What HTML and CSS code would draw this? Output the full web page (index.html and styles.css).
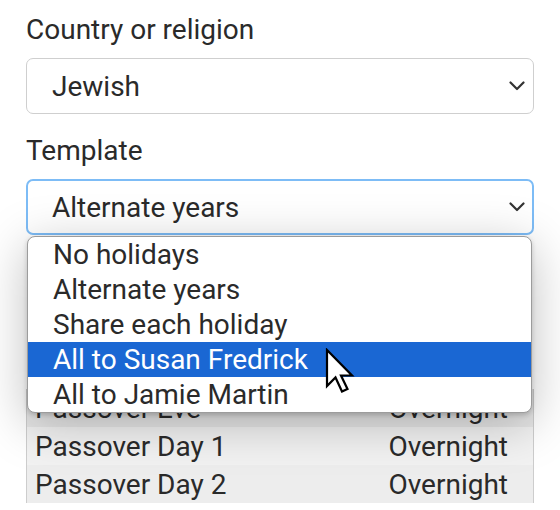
FILE: index.html
```html
<!DOCTYPE html>
<html>
<head>
<meta charset="utf-8">
<link rel="stylesheet" href="styles.css">
</head>
<body>
<div class="page">
  <label class="lbl">Country or religion</label>
  <div class="select s1">
    <span class="val">Jewish</span>
    <svg class="chev" width="16" height="10" viewBox="0 0 16 10"><path d="M1.5 1.5 L8 8 L14.5 1.5" fill="none" stroke="#333" stroke-width="2.2" stroke-linecap="round" stroke-linejoin="round"/></svg>
  </div>
  <label class="lbl lbl2">Template</label>
  <div class="wrap">
    <div class="select s2">
      <span class="val">Alternate years</span>
      <svg class="chev" width="16" height="10" viewBox="0 0 16 10"><path d="M1.5 1.5 L8 8 L14.5 1.5" fill="none" stroke="#333" stroke-width="2.2" stroke-linecap="round" stroke-linejoin="round"/></svg>
    </div>
    <ul class="dropdown">
      <li>No holidays</li>
      <li>Alternate years</li>
      <li>Share each holiday</li>
      <li class="sel">All to Susan Fredrick</li>
      <li>All to Jamie Martin</li>
    </ul>
  </div>
  <table class="tbl">
    <tr class="r-eve"><td>Passover Eve</td><td class="t">Overnight</td></tr>
    <tr class="r-d1"><td>Passover Day 1</td><td class="t">Overnight</td></tr>
    <tr class="r-d2"><td>Passover Day 2</td><td class="t">Overnight</td></tr>
  </table>
  <svg class="cursor" width="30" height="46" viewBox="0 0 30 46"><path d="M2 2 L2 38 L10.5 29.5 L17 43.5 L22.5 41 L16 27.5 L27 27.5 Z" fill="#fff" stroke="#000" stroke-width="2.2" stroke-linejoin="miter"/></svg>
</div>
</body>
</html>
```
FILE: styles.css
```css
html, body {
  margin: 0;
  padding: 0;
  background: #fff;
}
body {
  font-family: Roboto, "Liberation Sans", sans-serif;
  color: #2a2a2a;
  font-size: 28px;
}
.page {
  position: relative;
  padding: 13px 26px 0 26px;
  width: 508px;
  height: 497px;
  overflow: hidden;
}
.lbl {
  display: block;
  line-height: 34px;
  height: 34px;
  color: #2a2a2a;
  margin-bottom: 11px;
}
.lbl2 {
  margin-top: 20px;
}
.select {
  box-sizing: border-box;
  height: 56px;
  border: 1px solid #cfcfcf;
  border-radius: 7px;
  display: flex;
  align-items: center;
  justify-content: space-between;
  padding: 0 8px 0 25px;
  background: #fff;
}
.s2 {
  border: 2px solid #7dbcf6;
  padding: 0 7px 0 24px;
}
.val {
  line-height: 33px;
}
.chev {
  display: block;
}
.wrap {
  position: relative;
}
.dropdown {
  position: absolute;
  z-index: 2;
  left: 1px;
  top: calc(100% + 1px);
  width: 503px;
  margin: 0;
  padding: 0;
  list-style: none;
  background: #fff;
  border: 1px solid #9c9c9c;
  border-radius: 8px;
  box-shadow: 0 10px 50px rgba(0, 0, 0, 0.26), 0 2px 5px rgba(0, 0, 0, 0.18);
  overflow: hidden;
}
.dropdown li {
  height: 35px;
  line-height: 35px;
  padding-left: 25px;
  color: #2a2a2a;
}
.dropdown li.sel {
  background: #1a67d3;
  color: #fff;
}
.tbl {
  margin-top: 154px;
  width: 508px;
  border-collapse: collapse;
  border-left: 1px solid #cdcdcd;
  border-right: 1px solid #cdcdcd;
}
.tbl td {
  height: 38px;
  line-height: 33px;
  padding: 0 0 0 8px;
  color: #2a2a2a;
}
.tbl td.t {
  text-align: right;
  padding: 0 25px 0 0;
}
.r-eve td { background: #e6e6e6; }
.r-d1 td { background: #f2f2f2; }
.r-d2 td { background: #ededed; }
.cursor {
  position: absolute;
  z-index: 3;
  left: 325px;
  top: 348px;
}
```
